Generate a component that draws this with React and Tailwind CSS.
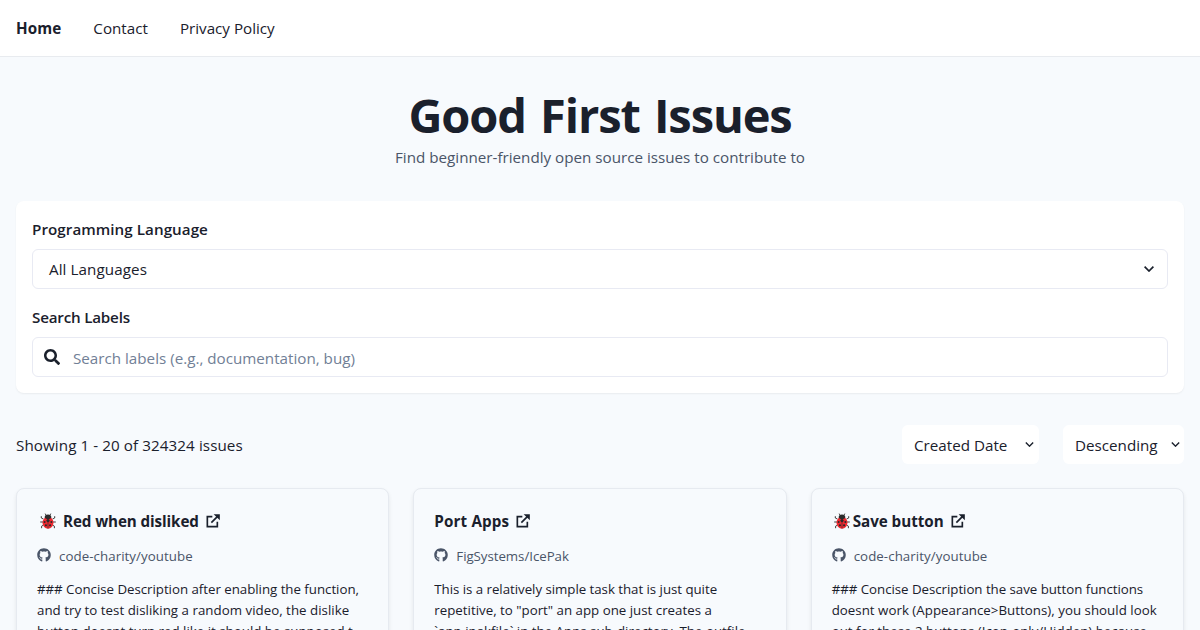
import React from 'react';
import { FaSearch, FaGithub } from 'react-icons/fa';

function Chevron({ className }) {
  return (
    <svg viewBox="0 0 10 6" className={className} fill="none" stroke="#1a202c" strokeWidth="1.7">
      <path d="M0.6 0.7 5 5 9.4 0.7" />
    </svg>
  );
}

function ExternalLink() {
  return (
    <svg viewBox="0 0 24 24" className="-ml-px h-4 w-4 shrink-0" fill="none" stroke="currentColor" strokeWidth="2.5">
      <path d="M18.500 13v7.500H3.500V5.500H11" />
      <path d="M16 3h5v5z" fill="currentColor" />
      <path d="M9.5 14.5 20 4" />
    </svg>
  );
}

function Ladybug() {
  return (
    <svg viewBox="0 0 16 16" className="h-4 w-4 shrink-0">
      <g fill="none" stroke="#2b2b2b" strokeWidth="0.9">
        <path d="M6.2 2.6 5.2.6M9.8 2.6l1-2M3.4 6 1.3 5V3.2M12.6 6l2.1-1V3.2M3 9H.2M13 9h2.8M3.6 12l-2 1.2v2M12.4 12l2 1.2v2" />
      </g>
      <ellipse cx="8" cy="9.7" rx="5.5" ry="6" fill="#f0282f" />
      <path d="M4.6 4.6C4.6 2.6 6 1.5 8 1.5s3.4 1.1 3.4 3.1C10.6 5.7 9.5 6.2 8 6.2S5.4 5.7 4.6 4.600z" fill="#2b2b2b" />
      <path d="M8 6v9.6" stroke="#2b2b2b" strokeWidth="0.6" />
      <g fill="#2b2b2b">
        <circle cx="8" cy="7.6" r="1.6" />
        <circle cx="4.6" cy="8.9" r="1" />
        <circle cx="11.4" cy="8.9" r="1" />
        <circle cx="5.9" cy="12.3" r="1.1" />
        <circle cx="10.1" cy="12.3" r="1.1" />
      </g>
    </svg>
  );
}

const issues = [
  {
    bug: 'ml-[3px] mr-[7px]',
    title: 'Red when disliked',
    titleClass: 'tracking-[-0.1px]',
    repo: 'code-charity/youtube',
    repoClass: 'tracking-[0.06px]',
    lines: [
      ['### Concise Description after enabling the function,', 'tracking-[-0.03px]'],
      ['and try to test disliking a random video, the dislike', 'tracking-[0.02px]'],
      ['button doesnt turn red like it should be supposed t', 'tracking-[0px]'],
    ],
  },
  {
    title: 'Port Apps',
    titleClass: 'tracking-[0.14px]',
    repo: 'FigSystems/IcePak',
    repoClass: 'tracking-[-0.05px]',
    lines: [
      ['This is a relatively simple task that is just quite', 'tracking-[-0.04px]'],
      ['repetitive, to "port" an app one just creates a', 'tracking-[0px]'],
      ['`app.ipakfile` in the Apps sub-directory. The outfile', 'tracking-[0px]'],
    ],
  },
  {
    bug: 'ml-0.5 mr-[3px]',
    title: 'Save button',
    titleClass: 'tracking-[-0.03px]',
    repo: 'code-charity/youtube',
    repoClass: 'tracking-[0.06px]',
    lines: [
      ['### Concise Description the save button functions', 'tracking-[-0.04px]'],
      ['doesnt work (Appearance>Buttons), you should look', 'tracking-[0.02px]'],
      ['out for these 2 buttons (Icon-only/Hidden) because', 'tracking-[0px]'],
    ],
  },
];

function IssueCard({ issue }) {
  return (
    <article className="h-72 rounded-lg border border-[#e6eaf0] bg-[#f7fafd] p-5 shadow-[0_2px_5px_-1px_rgba(0,0,0,0.12)]">
      <h2 className={`flex h-6 items-center text-[15.2px] font-bold ${issue.titleClass}`}>
        {issue.bug && <span className={issue.bug}><Ladybug /></span>}
        <span className="mr-[7px]">{issue.title}</span>
        <ExternalLink />
      </h2>
      <div className="mt-3 flex h-[21px] items-center gap-2 text-[13.3px] text-[#4a5568]">
        <FaGithub className="mb-0.5 h-3.5 w-3.5" />
        <span className={issue.repoClass}>{issue.repo}</span>
      </div>
      <div className="mt-[13px] text-[13.3px] leading-[21px]">
        {issue.lines.map(([line, tracking]) => (
          <p key={line} className={tracking}>{line}</p>
        ))}
      </div>
    </article>
  );
}

export default function App() {
  return (
    <div className="h-[630px] overflow-hidden whitespace-nowrap bg-[#f7fafd] font-['Open_Sans',sans-serif] text-[15.2px] leading-6 text-[#1a202c]">
      <nav className="flex h-[57px] items-center gap-8 border-b border-[#e8ebef] bg-white px-4">
        <a className="font-bold tracking-[0.1px]">Home</a>
        <a>Contact</a>
        <a>Privacy Policy</a>
      </nav>
      <main className="px-4 pt-8">
        <header className="text-center">
          <h1 className="h-14 text-[47px] font-bold leading-[53px] tracking-[-1.1px] [word-spacing:3px]">Good First Issues</h1>
          <p className="text-[#4a5568]">Find beginner-friendly open source issues to contribute to</p>
        </header>
        <section className="mt-8 rounded-lg bg-white p-4 shadow-[0_1px_2px_rgba(0,0,0,0.06)]">
          <div className="font-semibold tracking-[0.05px]">Programming Language</div>
          <div className="mt-2 flex h-10 items-center justify-between rounded-md border border-[#e8eaf3] pl-4 pr-[13px]">
            <span className="tracking-[0.08px]">All Languages</span>
            <Chevron className="h-1.5 w-2.5" />
          </div>
          <div className="mt-4 font-semibold tracking-[-0.2px]">Search Labels</div>
          <div className="mt-2 flex h-10 items-center gap-[13px] rounded-md border border-[#e8eaf3] px-[11px]">
            <FaSearch className="h-4 w-4" />
            <span className="pt-0.5 text-[#718096]">Search labels (e.g., documentation, bug)</span>
          </div>
        </section>
        <div className="mt-8 flex h-10 items-center">
          <span className="tracking-[0.08px]">Showing 1 - 20 of 324324 issues</span>
          <div className="ml-auto flex h-[39px] w-[137px] items-center justify-between self-start rounded-md bg-white pl-3 pr-[5px]">
            <span>Created Date</span>
            <Chevron className="h-[5px] w-[9px]" />
          </div>
          <div className="ml-6 flex h-[39px] w-[121px] items-center justify-between self-start rounded-md bg-white pl-3 pr-1">
            <span>Descending</span>
            <Chevron className="h-[5px] w-[9px]" />
          </div>
        </div>
        <section className="mt-[23px] grid grid-cols-3 gap-6">
          {issues.map((issue, i) => (
            <IssueCard key={i} issue={issue} />
          ))}
        </section>
      </main>
    </div>
  );
}
